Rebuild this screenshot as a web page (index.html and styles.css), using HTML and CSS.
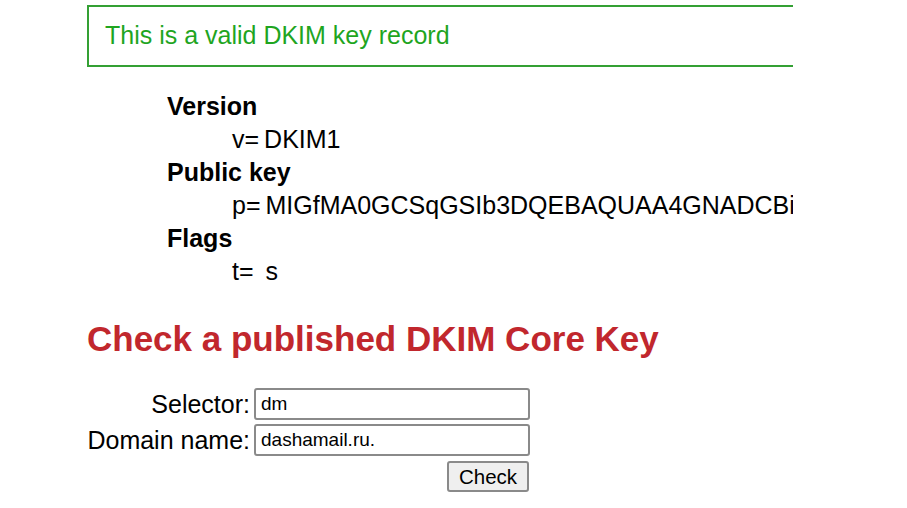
FILE: index.html
```html
<!DOCTYPE html>
<html>
<head>
<meta charset="utf-8">
<link rel="stylesheet" href="styles.css">
</head>
<body>
<div class="page">
  <div class="clip">
    <div class="valid">This is a valid DKIM key record</div>
    <dl class="tags">
      <dt>Version</dt>
      <dd><span class="k">v=</span>DKIM1</dd>
      <dt>Public key</dt>
      <dd><span class="k">p=</span>MIGfMA0GCSqGSIb3DQEBAQUAA4GNADCBiQKBgQC3kd8aF0xPqL2vR7mNn5cWtY</dd>
      <dt>Flags</dt>
      <dd><span class="k">t=</span> s</dd>
    </dl>
  </div>
  <h2 class="title">Check a published DKIM Core Key</h2>
  <form class="form">
    <label class="lbl" for="sel">Selector:</label>
    <input class="inp" id="sel" type="text" value="dm">
    <label class="lbl" for="dom">Domain name:</label>
    <input class="inp" id="dom" type="text" value="dashamail.ru.">
    <span></span>
    <div class="btnrow"><button type="button" class="btn">Check</button></div>
  </form>
</div>
</body>
</html>
```
FILE: styles.css
```css
html, body {
  margin: 0;
  padding: 0;
  background: #fff;
}
body {
  font-family: "Liberation Sans", Arial, sans-serif;
  color: #000;
}
.page {
  padding: 5px 0 0 87px;
}
.clip {
  width: 706px;
  overflow: hidden;
}
.valid {
  width: 900px;
  box-sizing: border-box;
  height: 62px;
  border: 2px solid #34a034;
  color: #1fa51f;
  font-size: 25px;
  line-height: 28px;
  padding: 14px 0 0 16px;
}
.tags {
  margin: 23px 0 0 80px;
  font-size: 25px;
  line-height: 33px;
  white-space: nowrap;
}
.tags dt {
  font-weight: bold;
}
.tags dd {
  margin: 0 0 0 65px;
}
.k {
  margin-right: 5px;
}
.title {
  margin: 31px 0 0 0;
  color: #c1272d;
  font-size: 35px;
  font-weight: bold;
}
.form {
  display: grid;
  grid-template-columns: 163px 276px;
  column-gap: 4px;
  row-gap: 4px;
  margin-top: 29px;
  align-items: center;
  font-size: 25px;
}
.lbl {
  text-align: right;
}
.inp {
  box-sizing: border-box;
  width: 276px;
  height: 32px;
  border: 2px solid #8a8a8a;
  border-radius: 3px;
  font-family: "Liberation Sans", Arial, sans-serif;
  font-size: 19px;
  padding: 0 5px;
  color: #000;
}
.btnrow {
  display: flex;
  justify-content: flex-end;
  padding-top: 1px;
  padding-right: 1px;
}
.btn {
  box-sizing: border-box;
  width: 82px;
  height: 31px;
  border: 2px solid #8a8a8a;
  border-radius: 3px;
  background: #efefef;
  font-family: "Liberation Sans", Arial, sans-serif;
  font-size: 20.5px;
  color: #000;
  padding: 0;
}
```
